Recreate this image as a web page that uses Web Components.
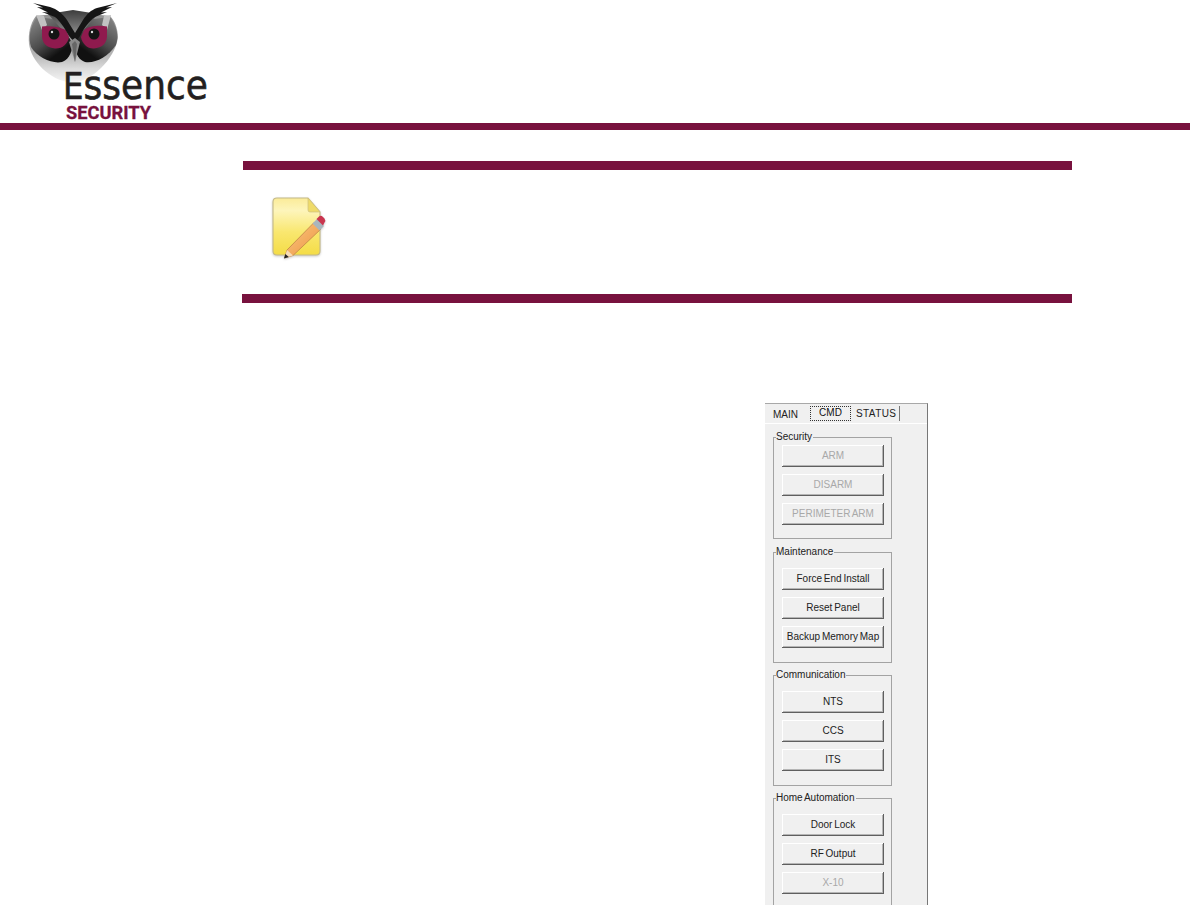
<!DOCTYPE html>
<html lang="en">
<head>
<meta charset="utf-8">
<title>Essence Security</title>
<style>
  html, body { margin: 0; height: 905px; overflow: hidden; background: #fff; }
</style>
</head>
<body>
<es-header></es-header>
<note-block></note-block>
<cmd-panel>
  <cmd-group title="Security" compact>
    <win-button disabled>ARM</win-button>
    <win-button disabled>DISARM</win-button>
    <win-button disabled>PERIMETER ARM</win-button>
  </cmd-group>
  <cmd-group title="Maintenance">
    <win-button>Force End Install</win-button>
    <win-button>Reset Panel</win-button>
    <win-button>Backup Memory Map</win-button>
  </cmd-group>
  <cmd-group title="Communication">
    <win-button>NTS</win-button>
    <win-button>CCS</win-button>
    <win-button>ITS</win-button>
  </cmd-group>
  <cmd-group title="Home Automation">
    <win-button>Door Lock</win-button>
    <win-button>RF Output</win-button>
    <win-button disabled>X-10</win-button>
  </cmd-group>
</cmd-panel>

<script>
/**
 * Page header: owl logo and the wide rule under it
 */
class EsHeader extends HTMLElement {
  constructor() {
    super();
    this.attachShadow({ mode: 'open' });
  }

  connectedCallback() {
    this.shadowRoot.innerHTML = `
      <style>
        :host { display: block; }
        svg { display: block; width: 230px; height: 123px; }
        .bar { height: 7px; background: #78123e; }
        .essence { font-family: 'DejaVu Sans', sans-serif; fill: #231f20; stroke: #231f20; stroke-width: 0.6px; }
        .security { font-family: 'Roboto', 'Liberation Sans', sans-serif; font-weight: 700; fill: #78123e; stroke: #78123e; stroke-width: 0.3px; }
      </style>
      <svg viewBox="0 0 230 123" role="img" aria-label="Essence Security logo">
        <defs>
          <linearGradient id="head" x1="0" y1="0" x2="0" y2="1">
            <stop offset="0" stop-color="#8f8f8f"/>
            <stop offset="0.6" stop-color="#b5b5b5"/>
            <stop offset="0.8" stop-color="#dcdcdc"/>
            <stop offset="1" stop-color="#f6f6f6"/>
          </linearGradient>
          <linearGradient id="maskL" x1="0" y1="0" x2="0.7" y2="1">
            <stop offset="0" stop-color="#8c8c8c"/>
            <stop offset="0.55" stop-color="#4a4a4a"/>
            <stop offset="0.85" stop-color="#111"/>
          </linearGradient>
          <linearGradient id="maskR" x1="1" y1="0" x2="0.3" y2="1">
            <stop offset="0" stop-color="#8c8c8c"/>
            <stop offset="0.55" stop-color="#4a4a4a"/>
            <stop offset="0.85" stop-color="#111"/>
          </linearGradient>
          <linearGradient id="crown" x1="0" y1="0" x2="0" y2="1">
            <stop offset="0" stop-color="#3c3c3c"/>
            <stop offset="1" stop-color="#a8a8a8"/>
          </linearGradient>
        </defs>
        <g style="filter: blur(0.35px)">
          <path d="M36 16C30 24 28 34 29 44C31 60 48 80 72 83C92 81 114 60 118 38C118 28 114 20 110 16L73 12Z" fill="url(#head)"/>
          <path d="M37 17C30 26 28 38 31 47C38 58 52 64 62 62C68 60 71 54 73 46L62 20Z" fill="url(#maskL)"/>
          <path d="M110 17C117 26 119 36 116 45C108 57 94 64 85 62C79 60 76 54 74 46L85 20Z" fill="url(#maskR)"/>
          <path d="M36 15L42 30L47 25L44 16Z" fill="#c2c2c2"/>
          <path d="M111 15L107 30L102 25L104 16Z" fill="#c2c2c2"/>
          <path d="M48 14L73 42L98 14L73 10Z" fill="url(#crown)"/>
          <path d="M42 26.500C50 25.500 60 27 66 30L69 37C68 44 62 49 55 48.500C47 48 42 43 42 36Z" fill="#8f1a4e"/>
          <path d="M107 26.500C99 25 89 26 84 30L81 37C82 44 88 49 94 48.500C102 48 107 43 107 36Z" fill="#8f1a4e"/>
          <circle cx="54" cy="34" r="5.500" fill="#141414"/>
          <circle cx="94" cy="34" r="5.500" fill="#141414"/>
          <circle cx="52" cy="32" r="1.200" fill="#ddd"/>
          <circle cx="92" cy="32" r="1.200" fill="#ddd"/>
          <path d="M33 3L50 7C57 9 63 14 67 20L75 33L75 43L69 36C64 27 60 21 55 17L42 12L48 12.500L37 7L43 7.500Z" fill="#151515"/>
          <path d="M117 3L97 8C91 10 87 14 83 20L75 33L75 43L80 36C85 27 89 21 95 17L107 12L101 12.500L112 7L106 7.500Z" fill="#151515"/>
          <path d="M69 42L75 38L80 42L75 62Z" fill="#8a8a8a"/>
          <path d="M72 44L75 62L77 44L75 41Z" fill="#666"/>
        </g>
        <text class="essence" x="63" y="98.500" textLength="145" lengthAdjust="spacingAndGlyphs"><tspan font-size="37">E</tspan><tspan font-size="41">ssence</tspan></text>
        <text class="security" x="66" y="118.500" font-size="19" textLength="85" lengthAdjust="spacingAndGlyphs">SECURITY</text>
      </svg>
      <div class="bar"></div>
    `;
  }
}
customElements.define('es-header', EsHeader);

/**
 * Note callout: two rules with the note icon between them
 */
class NoteBlock extends HTMLElement {
  constructor() {
    super();
    this.attachShadow({ mode: 'open' });
  }

  connectedCallback() {
    this.shadowRoot.innerHTML = `
      <style>
        :host { display: block; width: 830px; margin: 31px 0 0 242px; }
        .rule { height: 9px; background: #78123e; }
        .rule.top { margin-left: 1px; }
        .body { height: 124px; padding: 25px 0 0 30px; box-sizing: border-box; }
        svg { display: block; width: 56px; height: 66px; filter: blur(0.5px) drop-shadow(0 1px 1px rgba(0,0,0,.2)); }
      </style>
      <div class="rule top"></div>
      <div class="body">
        <svg viewBox="0 0 56 66" aria-hidden="true">
          <defs>
            <linearGradient id="paper" x1="0" y1="0" x2="0" y2="1">
              <stop offset="0" stop-color="#fbeb98"/>
              <stop offset="0.22" stop-color="#fdf5bb"/>
              <stop offset="0.6" stop-color="#f9e76f"/>
              <stop offset="1" stop-color="#f4dc46"/>
            </linearGradient>
            <linearGradient id="pencil" x1="0" y1="0" x2="1" y2="1">
              <stop offset="0" stop-color="#fbc783"/>
              <stop offset="1" stop-color="#ec9440"/>
            </linearGradient>
          </defs>
          <path d="M5 3H36L48 17V56Q48 60 44 60H5Q1 60 1 56V7Q1 3 5 3Z" fill="url(#paper)" stroke="#c4b987" stroke-width="1.100"/>
          <path d="M36 3V15Q36 17 38 17H48Z" fill="#efdb6a" stroke="#cfc07e" stroke-width="0.700"/>
          <path d="M12.500 63L15 55L42 27.500L49 34L21 60.500Z" fill="url(#pencil)" stroke="#b97d45" stroke-width="0.700"/>
          <path d="M12.500 63L15 55L21 60.500Z" fill="#f6dcb8"/>
          <path d="M12 63.500L13.300 59L16.800 62Z" fill="#222"/>
          <path d="M40.500 28.500L45 24L52 31L47.500 35.500Z" fill="#a9b6bd"/>
          <path d="M44.500 24L47 21.500Q49 20 51 22L52.500 23.500Q54 25.500 52.500 27.500L51 30.500Z" fill="#c9364f"/>
        </svg>
      </div>
      <div class="rule"></div>
    `;
  }
}
customElements.define('note-block', NoteBlock);

/**
 * Windows style command panel with tabs, group boxes go in the slot
 */
class CmdPanel extends HTMLElement {
  constructor() {
    super();
    this.attachShadow({ mode: 'open' });
  }

  connectedCallback() {
    this.shadowRoot.innerHTML = `
      <style>
        :host {
          display: block; box-sizing: border-box; width: 163px; height: 502px;
          margin: 100px 0 0 765px; background: #f0f0f0; overflow: hidden;
          border-top: 1px solid #a8a8a8; border-right: 1px solid #777;
          font: 10px 'Liberation Sans', sans-serif; word-spacing: -1px; color: #222;
        }
        .tabs {
          display: flex; align-items: flex-end; height: 19px; padding-left: 8px;
          border-bottom: 1px solid #fff;
        }
        .tab { padding: 0 0 2px; line-height: 12px; }
        .main { width: 37px; }
        .cmd {
          width: 41px; margin-right: 5px; height: 15px; text-align: center; line-height: 13px;
          outline: 1px dotted #333; outline-offset: -1px; padding: 0; margin-bottom: 2px;
          color: #111;
        }
        .status { padding-right: 3px; border-right: 1px solid #777; height: 15px; line-height: 16px; padding-bottom: 0; margin-bottom: 2px; letter-spacing: .4px; }
        .groups { padding-top: 7px; }
      </style>
      <div class="tabs">
        <div class="tab main">MAIN</div>
        <div class="tab cmd">CMD</div>
        <div class="tab status">STATUS</div>
      </div>
      <div class="groups"><slot></slot></div>
    `;
  }
}
customElements.define('cmd-panel', CmdPanel);

/**
 * Group box with its caption on the top border
 */
class CmdGroup extends HTMLElement {
  constructor() {
    super();
    this.attachShadow({ mode: 'open' });
  }

  connectedCallback() {
    this.shadowRoot.innerHTML = `
      <style>
        :host { display: block; width: 119px; margin: 0 0 6px 8px; }
        :host([compact]) { margin-bottom: 7px; }
        fieldset {
          margin: 0; padding: 10px 7px 14px 8px; min-width: 0;
          border: 1px solid #a3a3a3; box-sizing: border-box;
          display: flex; flex-direction: column; gap: 7px;
        }
        :host([compact]) fieldset { padding: 2px 7px 13px 8px; }
        legend { padding: 0 1px 0 0; margin-left: -6px; line-height: 12px; height: 12px; }
      </style>
      <fieldset>
        <legend>${this.getAttribute('title') || ''}</legend>
        <slot></slot>
      </fieldset>
    `;
  }
}
customElements.define('cmd-group', CmdGroup);

/**
 * Classic raised button
 */
class WinButton extends HTMLElement {
  constructor() {
    super();
    this.attachShadow({ mode: 'open' });
  }

  connectedCallback() {
    this.shadowRoot.innerHTML = `
      <style>
        :host {
          display: flex; align-items: center; justify-content: center;
          width: 102px; height: 22px; padding-bottom: 2px; box-sizing: border-box;
          background: #f0f0f0; white-space: nowrap;
          box-shadow: inset -1px -1px 0 #5f5f5f, inset 1px 1px 0 #fff, inset -2px -2px 0 #b5b5b5;
        }
        :host([disabled]) { color: #a8a8a8; }
      </style>
      <slot></slot>
    `;
  }
}
customElements.define('win-button', WinButton);
</script>
</body>
</html>
